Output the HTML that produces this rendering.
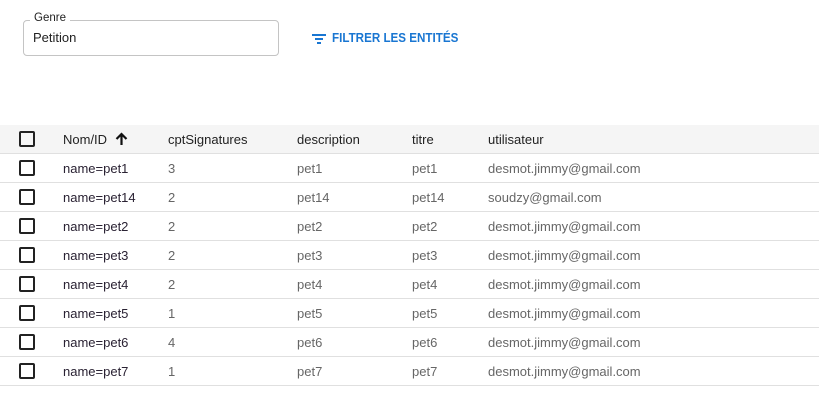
<!DOCTYPE html>
<html><head><meta charset="utf-8"><style>
body{margin:0;width:819px;height:410px;background:#fff;font-family:"Liberation Sans",Arial,sans-serif;position:relative;overflow:hidden}
.field{position:absolute;left:23px;top:20px;width:254px;height:34px;border:1px solid #c4c4c4;border-radius:4px}
.field .lbl{position:absolute;left:6px;top:-9px;background:#fff;padding:0 4px;font-size:11.5px;color:#222}
.field .val{position:absolute;left:9px;top:9px;font-size:13px;color:#222}
.btn{position:absolute;left:312px;top:31px;font-size:12.5px;font-weight:bold;color:#1976d2}
.btn svg{position:absolute;left:0;top:2px}
.btn span{position:absolute;left:20px;top:0;white-space:nowrap;transform:scaleX(0.93);transform-origin:0 0}
.row{position:absolute;left:0;width:819px;height:28px;border-bottom:1px solid #e0e0e0;font-size:13px;color:#666}
.row.h{background:#f5f5f5;color:#222}
.row div{position:absolute;top:7px;white-space:nowrap}
.cb{left:19px!important;top:6px!important;width:12px;height:12px;border:2px solid #222;border-radius:2px}
.c1{left:63px}.c2{left:168px}.c3{left:297px}.c4{left:412px}.c5{left:488px}
.row .c1{color:#2a2233}
</style></head><body>
<div class="field"><div class="lbl">Genre</div><div class="val">Petition</div></div>
<div class="btn"><svg width="14" height="12" viewBox="0 0 14 12"><rect x="0" y="1" width="14" height="2" fill="#1976d2"/><rect x="3" y="5" width="8" height="2" fill="#1976d2"/><rect x="5" y="9" width="4" height="2" fill="#1976d2"/></svg><span>FILTRER LES ENTITÉS</span></div>
<div class="row h" style="top:125px"><div class="cb"></div><div class="c1" style="color:#222">Nom/ID <svg width="13" height="14" viewBox="0 0 13 14" style="vertical-align:-2px;margin-left:4px"><path d="M6.5 13V2M1.5 7L6.5 2l5 5" stroke="#111" stroke-width="2.2" fill="none"/></svg></div><div class="c2">cptSignatures</div><div class="c3">description</div><div class="c4">titre</div><div class="c5">utilisateur</div></div>
<div class="row" style="top:154px"><div class="cb"></div><div class="c1">name=pet1</div><div class="c2">3</div><div class="c3">pet1</div><div class="c4">pet1</div><div class="c5">desmot.jimmy@gmail.com</div></div>
<div class="row" style="top:183px"><div class="cb"></div><div class="c1">name=pet14</div><div class="c2">2</div><div class="c3">pet14</div><div class="c4">pet14</div><div class="c5">soudzy@gmail.com</div></div>
<div class="row" style="top:212px"><div class="cb"></div><div class="c1">name=pet2</div><div class="c2">2</div><div class="c3">pet2</div><div class="c4">pet2</div><div class="c5">desmot.jimmy@gmail.com</div></div>
<div class="row" style="top:241px"><div class="cb"></div><div class="c1">name=pet3</div><div class="c2">2</div><div class="c3">pet3</div><div class="c4">pet3</div><div class="c5">desmot.jimmy@gmail.com</div></div>
<div class="row" style="top:270px"><div class="cb"></div><div class="c1">name=pet4</div><div class="c2">2</div><div class="c3">pet4</div><div class="c4">pet4</div><div class="c5">desmot.jimmy@gmail.com</div></div>
<div class="row" style="top:299px"><div class="cb"></div><div class="c1">name=pet5</div><div class="c2">1</div><div class="c3">pet5</div><div class="c4">pet5</div><div class="c5">desmot.jimmy@gmail.com</div></div>
<div class="row" style="top:328px"><div class="cb"></div><div class="c1">name=pet6</div><div class="c2">4</div><div class="c3">pet6</div><div class="c4">pet6</div><div class="c5">desmot.jimmy@gmail.com</div></div>
<div class="row" style="top:357px"><div class="cb"></div><div class="c1">name=pet7</div><div class="c2">1</div><div class="c3">pet7</div><div class="c4">pet7</div><div class="c5">desmot.jimmy@gmail.com</div></div>
</body></html>
